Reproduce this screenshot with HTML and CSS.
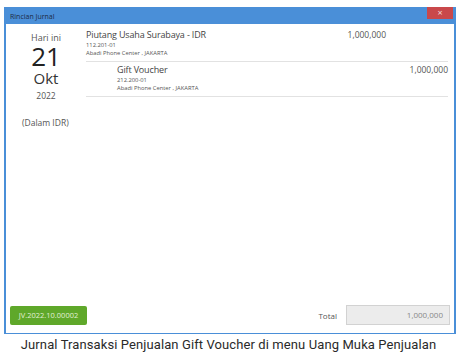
FILE: index.html
```html
<!DOCTYPE html>
<html lang="en">
<head>
  <meta charset="UTF-8" />
  <title>Rincian Jurnal</title>
  <link rel="stylesheet" href="styles.css">
</head>
<body>

  <div class="window">
    <div class="titlebar">
      <span class="title">Rincian Jurnal</span>
      <span class="close">&#215;</span>
    </div>

    <div class="content">
      <div class="date-col">
        <div class="today">Hari ini</div>
        <div class="day">21</div>
        <div class="month">Okt</div>
        <div class="year">2022</div>
        <div class="currency">(Dalam IDR)</div>
      </div>

      <div class="entries">
        <div class="entry debit">
          <div class="info">
            <div class="account">Piutang Usaha Surabaya - IDR</div>
            <div class="code">112.201-01</div>
            <div class="contact">Abadi Phone Center , JAKARTA</div>
          </div>
          <div class="amount">1,000,000</div>
        </div>
        <div class="entry credit">
          <div class="info">
            <div class="account">Gift Voucher</div>
            <div class="code">212.200-01</div>
            <div class="contact">Abadi Phone Center , JAKARTA</div>
          </div>
          <div class="amount">1,000,000</div>
        </div>
      </div>
    </div>

    <div class="footer">
      <button class="ref">JV.2022.10.00002</button>
      <span class="total-label">Total</span>
      <div class="total-box">1,000,000</div>
    </div>
  </div>

  <p class="caption">Jurnal Transaksi Penjualan Gift Voucher di menu Uang Muka Penjualan</p>

</body>
</html>
```

FILE: styles.css
```css
body {
  margin: 0;
  padding: 7px 3px 0 4px;
  background: #fff;
  font-family: 'Open Sans', sans-serif;
}

.window {
  height: 327px;
  border: 2px solid #4a8fd8;
  border-top: none;
  border-bottom-width: 1px;
  box-sizing: border-box;
  display: flex;
  flex-direction: column;
  color: #333;
}

.titlebar {
  height: 17px;
  background: #4a8fd8;
  display: flex;
  align-items: flex-start;
  justify-content: space-between;
}

.title {
  font-size: 7px;
  color: #1d2b45;
  padding: 5px 0 0 4px;
}

.close {
  width: 26px;
  height: 12px;
  background: #c9484b;
  color: #f3d6d6;
  font-size: 9px;
  line-height: 12px;
  text-align: center;
  margin-right: 1px;
}

.content {
  flex: 1;
  display: flex;
}

.date-col {
  width: 80px;
  text-align: center;
  color: #555;
  padding-top: 8px;
}

.today {
  font-size: 9px;
  line-height: 11px;
}

.day {
  font-size: 26px;
  line-height: 26px;
  color: #222;
}

.month {
  font-size: 15px;
  line-height: 15px;
  color: #333;
  margin-top: 2px;
}

.year {
  font-size: 8.5px;
  line-height: 9px;
  margin-top: 5px;
}

.currency {
  font-size: 8.5px;
  line-height: 9px;
  margin-top: 18px;
  text-align: left;
  padding-left: 16px;
}

.entries {
  flex: 1;
  margin-right: 6px;
  padding-top: 3px;
}

.entry {
  display: flex;
  border-bottom: 1px solid #e2e2e2;
  padding: 2px 0 4px 0;
}

.entry.credit {
  padding-left: 31px;
}

.info {
  flex: 1;
}

.account {
  font-size: 9px;
  letter-spacing: -0.15px;
  color: #444;
  line-height: 12px;
}

.code, .contact {
  font-size: 5.8px;
  color: #555;
  line-height: 8px;
}

.amount {
  font-size: 8.5px;
  color: #555;
  line-height: 12px;
}

.entry.debit .amount {
  margin-right: 62px;
}

.footer {
  display: flex;
  align-items: center;
  padding: 0 4px 8px 4px;
}

.ref {
  background: #5fa82a;
  color: #e2f0d6;
  border: none;
  border-radius: 2px;
  font-family: 'Open Sans', sans-serif;
  font-size: 7.5px;
  width: 77px;
  height: 19px;
  padding: 0;
}

.total-label {
  margin-left: auto;
  font-size: 8px;
  color: #555;
  margin-right: 9px;
}

.total-box {
  width: 96px;
  height: 18px;
  background: #ececec;
  border: 1px solid #d2d2d2;
  font-size: 8px;
  color: #888;
  text-align: right;
  line-height: 18px;
  padding-right: 6px;
}

.caption {
  margin: 3px 3px 0 0;
  text-align: center;
  font-family: 'Roboto', sans-serif;
  font-size: 13px;
  letter-spacing: 0.1px;
  color: #2a2a2a;
}
```
